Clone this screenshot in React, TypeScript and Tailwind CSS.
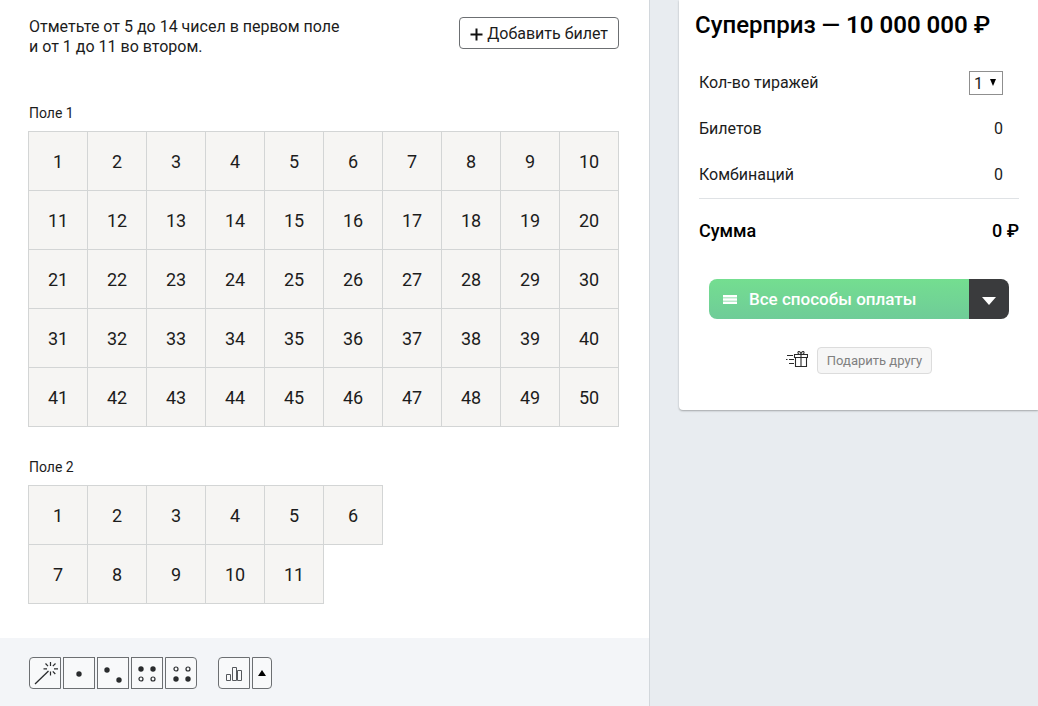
import { useState } from "react";
import type { ReactNode } from "react";
import clsx from "clsx";

type FieldProps = {
  title: string;
  count: number;
  perRow: number;
  selected: number[];
  onToggle: (n: number) => void;
};

function Field({ title, count, perRow, selected, onToggle }: FieldProps) {
  const numbers = Array.from({ length: count }, (_, i) => i + 1);

  return (
    <section>
      <h2 className="pl-px text-sm">{title}</h2>
      <div className="mt-2 grid grid-cols-10 pt-px pl-px">
        {numbers.map((n) => (
          <button
            key={n}
            type="button"
            aria-pressed={selected.includes(n)}
            onClick={() => onToggle(n)}
            className={clsx(
              "-mt-px -ml-px h-[60px] border border-[#d3d5d5] pt-0.5 text-lg",
              n % perRow === 1 && "col-start-1",
              selected.includes(n) ? "bg-[#74db92] text-white" : "bg-[#f6f5f3] hover:bg-white"
            )}
          >
            {n}
          </button>
        ))}
      </div>
    </section>
  );
}

function ToolButton({ label, className, children }: { label: string; className?: string; children: ReactNode }) {
  return (
    <button
      type="button"
      aria-label={label}
      className={clsx("flex h-8 items-center justify-center border border-[#6c6f72] bg-[#f8f9fa] text-[#2a2c2e]", className)}
    >
      {children}
    </button>
  );
}

function WandIcon() {
  return (
    <svg width="30" height="30" viewBox="0 0 30 30" fill="none" stroke="currentColor" strokeWidth="1.3">
      <path d="M5 26 18.5 13" />
      <path d="M20.5 4v4M20.5 13.5v4M13.5 10.8h3.5M24 10.8h4M15.5 5.5l2.5 2.7M25.5 5.5l-2.7 2.7M22.8 13.3l2.5 2.7" strokeWidth="1.2" />
    </svg>
  );
}

type Dot = { x: number; y: number; hollow?: boolean };

function DotsIcon({ dots }: { dots: Dot[] }) {
  return (
    <svg width="30" height="30" viewBox="0 0 30 30">
      {dots.map((d) => (
        <circle
          key={`${d.x}-${d.y}`}
          cx={d.x}
          cy={d.y}
          r={d.hollow ? 2 : 2.7}
          fill={d.hollow ? "none" : "currentColor"}
          stroke={d.hollow ? "currentColor" : "none"}
          strokeWidth="1.2"
        />
      ))}
    </svg>
  );
}

function StatsIcon() {
  return (
    <svg width="30" height="30" viewBox="0 0 30 30" fill="none" stroke="#55585c">
      <path d="M7.5 16.5h4v6h-4zM13.5 9.5h4v13h-4zM18.5 12.5h4v10h-4z" />
    </svg>
  );
}

function GiftIcon() {
  return (
    <svg width="22" height="22" viewBox="0 0 22 22" fill="none" stroke="#2b2b2b" strokeWidth="1.1">
      <path d="M8.5 4.5h13v3h-13zM9.5 7.5h11v9h-11zM15 4.5v12" />
      <path d="M15 4.5C13 4.5 11.5 3.5 12 2.2 12.7.8 14.8 1.5 15 4.5 15.2 1.5 17.3.8 18 2.2 18.5 3.5 17 4.5 15 4.5" />
      <path d="M1 5.5h6M3 9.5h5M0 9.5h1.5M3 13.5h5" />
    </svg>
  );
}

function Row({ label, children }: { label: ReactNode; children: ReactNode }) {
  return (
    <div className="flex h-[46px] items-center justify-between pr-4">
      {label}
      {children}
    </div>
  );
}

const presets: { label: string; dots: Dot[] }[] = [
  { label: "Одно число", dots: [{ x: 15, y: 16 }] },
  { label: "Два числа", dots: [{ x: 9, y: 12 }, { x: 21, y: 22 }] },
  {
    label: "Верхняя половина",
    dots: [{ x: 9, y: 11 }, { x: 21, y: 11 }, { x: 9, y: 21, hollow: true }, { x: 21, y: 21, hollow: true }],
  },
  {
    label: "Нижняя половина",
    dots: [{ x: 10, y: 11, hollow: true }, { x: 22, y: 11, hollow: true }, { x: 10, y: 21 }, { x: 22, y: 21 }],
  },
];

const toggle = (list: number[], n: number) => (list.includes(n) ? list.filter((x) => x !== n) : [...list, n]);

export default function App() {
  const [first, setFirst] = useState<number[]>([]);
  const [second, setSecond] = useState<number[]>([]);
  const [draws, setDraws] = useState("1");

  return (
    <div className="flex min-h-screen bg-[#e8ecf0] font-[Roboto,sans-serif] text-base text-[#1c1c1c]">
      <main className="min-w-0 flex-1 border-r border-[#d2d7dc] bg-white">
        <div className="pr-[30px] pb-[34px] pl-7">
          <header className="flex items-start justify-between pt-[17px] pl-px">
            <p className="leading-5">
              Отметьте от 5 до 14 чисел в первом поле
              <br />и от 1 до 11 во втором.
            </p>
            <button type="button" className="flex h-8 items-center gap-1 rounded border border-[#6c6f72] px-[10px] pt-0.5">
              <svg width="13" height="13" viewBox="0 0 13 13" stroke="#111" strokeWidth="2">
                <path d="M6.5.5v12M.5 6.5h12" />
              </svg>
              Добавить билет
            </button>
          </header>

          <div className="mt-[46px] space-y-[30px]">
            <Field title="Поле 1" count={50} perRow={10} selected={first} onToggle={(n) => setFirst(toggle(first, n))} />
            <Field title="Поле 2" count={11} perRow={6} selected={second} onToggle={(n) => setSecond(toggle(second, n))} />
          </div>
        </div>

        <footer className="flex min-h-[68px] gap-[21px] bg-[#f3f5f8] px-[29px] pt-[19px]">
          <div className="flex gap-[2px]">
            <ToolButton label="Случайные числа" className="w-8 rounded-l">
              <WandIcon />
            </ToolButton>
            {presets.map((p, i) => (
              <ToolButton key={p.label} label={p.label} className={clsx("w-8", i === presets.length - 1 && "rounded-r")}>
                <DotsIcon dots={p.dots} />
              </ToolButton>
            ))}
          </div>
          <div className="flex gap-[2px]">
            <ToolButton label="Статистика" className="w-8 rounded-l">
              <StatsIcon />
            </ToolButton>
            <ToolButton label="Развернуть" className="w-5 rounded-r">
              <svg width="8" height="6" viewBox="0 0 8 6" fill="#000">
                <path d="M4 0 8 6H0z" />
              </svg>
            </ToolButton>
          </div>
        </footer>
      </main>

      <aside className="w-[388px] shrink-0 pl-[29px]">
        <div className="rounded-bl bg-white pt-[9px] pr-[19px] pb-9 pl-5 shadow-[0_1px_2px_rgba(0,0,0,0.3)]">
          <h1 className="-ml-1 text-2xl font-medium whitespace-nowrap text-black">
            Суперприз&nbsp;— <b className="font-semibold">10 000 000</b> ₽
          </h1>

          <div className="mt-[19px] border-b border-[#dfe2e5]">
            <Row label={<label htmlFor="draws">Кол-во тиражей</label>}>
              <div className="relative">
                <select
                  id="draws"
                  value={draws}
                  onChange={(e) => setDraws(e.target.value)}
                  className="block h-6 w-[34px] appearance-none border border-[#8f8f8f] bg-white pl-1"
                >
                  <option>1</option>
                  <option>2</option>
                  <option>3</option>
                  <option>5</option>
                </select>
                <svg className="pointer-events-none absolute top-2 right-[7px]" width="6" height="7" viewBox="0 0 6 7">
                  <path d="M0 0h6L3 7z" />
                </svg>
              </div>
            </Row>
            <Row label="Билетов">
              <span>0</span>
            </Row>
            <Row label="Комбинаций">
              <span>0</span>
            </Row>
          </div>

          <div className="flex h-16 items-center justify-between text-lg font-medium text-black">
            <span>Сумма</span>
            <span>0 ₽</span>
          </div>

          <div className="mx-[10px] mt-4 flex h-10 overflow-hidden rounded-lg">
            <button
              type="button"
              className="flex flex-1 items-center gap-3 bg-linear-to-b from-[#74de90] to-[#6fcc98] pt-0.5 pl-[14px] text-[17px] font-medium text-white"
            >
              <svg width="14" height="10" viewBox="0 0 14 10" fill="#fff">
                <path d="M0 0h14v2.5H0zM0 3.300h14v2.5H0zM0 6.600h14v2.5H0z" />
              </svg>
              Все способы оплаты
            </button>
            <button type="button" aria-label="Выбрать способ" className="flex w-10 items-center justify-center bg-[#3a3b3d] pt-1">
              <svg width="14" height="8" viewBox="0 0 14 8" fill="#fff">
                <path d="M0 0h14L7 8z" />
              </svg>
            </button>
          </div>

          <div className="mt-7 flex items-center justify-center gap-[9px]">
            <GiftIcon />
            <button type="button" className="h-[27px] rounded border border-[#dcdcdc] bg-[#f6f6f6] px-[9px] text-[13px] text-[#808080]">
              Подарить другу
            </button>
          </div>
        </div>
      </aside>
    </div>
  );
}
